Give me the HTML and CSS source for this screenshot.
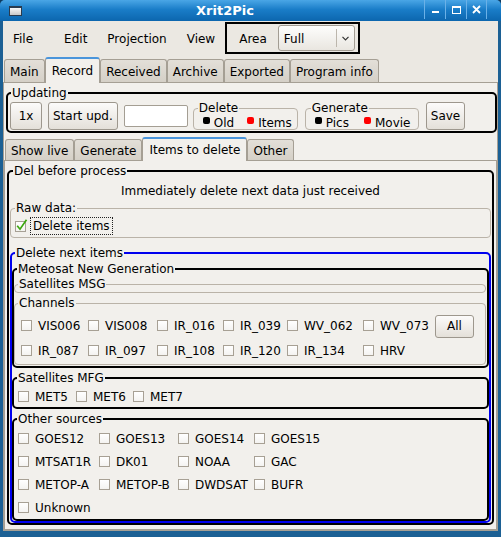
FILE: index.html
```html
<!DOCTYPE html>
<html lang="en">
<head>
<meta charset="utf-8">
<title>Xrit2Pic</title>
<link rel="stylesheet" href="styles.css">
</head>
<body>
<div class="window">
  <div class="titlebar">
    <span class="title-icon"></span>
    <span class="title">Xrit2Pic</span>
    <div class="wm">
      <span class="wm-btn"><svg width="9" height="9" viewBox="0 0 9 9"><rect x="1" y="6" width="7" height="2" fill="#fff"/></svg></span>
      <span class="wm-btn"><svg width="9" height="9" viewBox="0 0 9 9"><rect x="0.5" y="1.5" width="8" height="7" fill="none" stroke="#fff"/><rect x="0" y="1" width="9" height="2" fill="#fff"/></svg></span>
      <span class="wm-btn"><svg width="9" height="9" viewBox="0 0 9 9"><path d="M1 1L8 8M8 1L1 8" stroke="#fff" stroke-width="1.8"/></svg></span>
    </div>
  </div>
  <div class="client">
    <div class="menubar">
      <span class="menu-item menu-file">File</span>
      <span class="menu-item">Edit</span>
      <span class="menu-item">Projection</span>
      <span class="menu-item">View</span>
      <div class="area-box">
        <span class="area-label">Area</span>
        <div class="combo">
          <span class="combo-text">Full</span>
          <span class="combo-sep"></span>
          <span class="combo-arrow"><svg width="7" height="5" viewBox="0 0 7 5"><path d="M0.5 0.8L3.5 3.8L6.5 0.8" fill="none" stroke="#333" stroke-width="1.2"/></svg></span>
        </div>
      </div>
    </div>
    <div class="tabs">
      <span class="tab">Main</span>
      <span class="tab active">Record</span>
      <span class="tab">Received</span>
      <span class="tab">Archive</span>
      <span class="tab">Exported</span>
      <span class="tab">Program info</span>
    </div>
    <div class="page">
      <fieldset class="bframe updating">
        <legend>Updating</legend>
        <div class="upd-row">
          <button class="btn btn-1x">1x</button>
          <button class="btn">Start upd.</button>
          <input class="entry" type="text">
          <fieldset class="gframe opts opts-del">
            <legend>Delete</legend>
            <div class="opt-row">
              <span class="opt"><i class="dot"></i>Old</span>
              <span class="opt"><i class="dot red"></i>Items</span>
            </div>
          </fieldset>
          <fieldset class="gframe opts opts-gen">
            <legend>Generate</legend>
            <div class="opt-row">
              <span class="opt"><i class="dot"></i>Pics</span>
              <span class="opt"><i class="dot red"></i>Movie</span>
            </div>
          </fieldset>
          <button class="btn">Save</button>
        </div>
      </fieldset>

      <div class="subnb">
        <div class="tabs subtabs">
          <span class="tab">Show live</span>
          <span class="tab">Generate</span>
          <span class="tab active">Items to delete</span>
          <span class="tab">Other</span>
        </div>
        <div class="subpage">
          <fieldset class="bframe del">
            <legend>Del before process</legend>
            <div class="intro">Immediately delete next data just received</div>
            <fieldset class="gframe raw">
              <legend>Raw data:</legend>
              <div class="raw-row">
                <span class="box checked"><svg class="check" width="13" height="13" viewBox="0 0 13 13"><path d="M2.2 6.8L5 10.2L11.5 0.8" fill="none" stroke="#3ca80f" stroke-width="1.7"/></svg></span>
                <span class="focus">Delete items</span>
              </div>
            </fieldset>

            <fieldset class="bframe blue">
              <legend>Delete next items</legend>

              <fieldset class="bframe mng">
                <legend>Meteosat New Generation</legend>
                <fieldset class="gframe msg"><legend>Satellites MSG</legend></fieldset>
                <fieldset class="gframe chan">
                  <legend>Channels</legend>
                  <div class="grid channels-grid">
                    <span class="cb"><span class="box"></span>VIS006</span>
                    <span class="cb"><span class="box"></span>VIS008</span>
                    <span class="cb"><span class="box"></span>IR_016</span>
                    <span class="cb"><span class="box"></span>IR_039</span>
                    <span class="cb"><span class="box"></span>WV_062</span>
                    <span class="cb"><span class="box"></span>WV_073</span>
                    <button class="btn btn-all">All</button>
                    <span class="cb"><span class="box"></span>IR_087</span>
                    <span class="cb"><span class="box"></span>IR_097</span>
                    <span class="cb"><span class="box"></span>IR_108</span>
                    <span class="cb"><span class="box"></span>IR_120</span>
                    <span class="cb"><span class="box"></span>IR_134</span>
                    <span class="cb"><span class="box"></span>HRV</span>
                  </div>
                </fieldset>
              </fieldset>

              <fieldset class="bframe mfg">
                <legend>Satellites MFG</legend>
                <div class="grid mfg-grid">
                  <span class="cb"><span class="box"></span>MET5</span>
                  <span class="cb"><span class="box"></span>MET6</span>
                  <span class="cb"><span class="box"></span>MET7</span>
                </div>
              </fieldset>

              <fieldset class="bframe other">
                <legend>Other sources</legend>
                <div class="grid other-grid">
                  <span class="cb"><span class="box"></span>GOES12</span>
                  <span class="cb"><span class="box"></span>GOES13</span>
                  <span class="cb"><span class="box"></span>GOES14</span>
                  <span class="cb"><span class="box"></span>GOES15</span>
                  <span class="cb"><span class="box"></span>MTSAT1R</span>
                  <span class="cb"><span class="box"></span>DK01</span>
                  <span class="cb"><span class="box"></span>NOAA</span>
                  <span class="cb"><span class="box"></span>GAC</span>
                  <span class="cb"><span class="box"></span>METOP-A</span>
                  <span class="cb"><span class="box"></span>METOP-B</span>
                  <span class="cb"><span class="box"></span>DWDSAT</span>
                  <span class="cb"><span class="box"></span>BUFR</span>
                  <span class="cb"><span class="box"></span>Unknown</span>
                </div>
              </fieldset>
            </fieldset>
          </fieldset>
        </div>
      </div>
    </div>
  </div>
</div>
</body>
</html>
```
FILE: styles.css
```css
* { box-sizing: border-box; }
html, body { margin: 0; padding: 0; }
body {
  width: 501px; height: 537px; overflow: hidden;
  background: #0e3a5e;
  font-family: "DejaVu Sans", sans-serif; font-size: 12px; color: #000;
}
.window {
  width: 501px; height: 537px;
  display: flex; flex-direction: column;
  background: #1c6094;
  border-radius: 5px 5px 0 0;
}
.titlebar {
  height: 21px; flex: none;
  display: flex; align-items: center;
  background: linear-gradient(#4aa6e6, #1a7dc8 45%, #0c66ae);
  border-radius: 5px 5px 0 0;
  color: #fff;
}
.title-icon {
  width: 13px; height: 10px; margin-left: 9px;
  border: 1px solid #2a3b4e; border-top-width: 2px;
  background: linear-gradient(#f8f8f8, #c8c8c8);
}
.title {
  flex: 1; text-align: center; padding-left: 4px;
  font-weight: bold; font-size: 13px; line-height: 21px;
}
.wm { display: flex; align-self: flex-start; margin-right: 14px; }
.wm-btn {
  width: 21px; height: 19px;
  border-left: 1px solid #6bb1e7;
  display: flex; align-items: center; justify-content: center;
}
.wm-btn:last-child { border-right: 1px solid #6bb1e7; }
.wm-btn svg { display: block; }

.client {
  flex: 1; min-height: 0;
  display: flex; flex-direction: column;
  margin: 0 3px 6px 3px;
  background: #ebe8e2;
}

/* menu bar */
.menubar {
  height: 34px; flex: none;
  display: flex; align-items: center;
  padding-left: 10px;
}
.menu-item { line-height: 14px; white-space: nowrap; padding-top: 2px; }
.menu-item + .menu-item { margin-left: 20px; }
.menu-file { margin-right: 11px; }
.area-box {
  margin-left: 10px; width: 135px; height: 32px;
  border: 2px solid #000;
  display: flex; align-items: center;
  padding-left: 12px;
}
.area-label { padding-top: 2px; }
.combo {
  margin-left: 11px; width: 77px; height: 26px;
  border: 1px solid #a29c92; border-radius: 3px;
  background: linear-gradient(#fdfdfc, #e9e6e0);
  display: flex; align-items: center;
}
.combo-text { flex: 1; padding-left: 5px; padding-top: 1px; }
.combo-sep { width: 1px; height: 18px; background: #bcb6ac; }
.combo-arrow { width: 17px; display: flex; justify-content: center; }
.combo-arrow svg { display: block; }

/* notebook tabs */
.tabs {
  height: 27px; flex: none;
  display: flex; align-items: flex-end;
  padding-left: 1px;
}
.tab {
  height: 23px; padding: 1px 5px 0;
  border: 1px solid #a59f94; border-bottom: none;
  border-radius: 3px 3px 0 0;
  background: linear-gradient(#e3dfd8, #d5d0c7);
  display: flex; align-items: center;
  white-space: nowrap;
}
.tab.active {
  height: 26px; margin-bottom: -1px; padding: 0 6px;
  background: #f2f0ec;
  border-top: 2px solid #4a95db;
  position: relative; z-index: 1;
}
.page {
  flex: 1; min-height: 0;
  display: flex; flex-direction: column;
  background: #f2f0ec;
  border: 1px solid #a59f94;
  padding-top: 2px;
}

/* frames */
fieldset { margin: 0; padding: 0; min-width: 0; border: 0; }
legend { padding: 0 1px; line-height: 14px; white-space: nowrap; }
.bframe { border: 2px solid #000; border-radius: 5px; }
.gframe { border: 1px solid #bab3a8; border-radius: 4px; }

.updating { margin-left: 2px; }
.updating > legend { line-height: 16px; margin-left: 3px; }
.upd-row {
  display: flex; align-items: center;
  height: 29px; padding-left: 2px; margin-bottom: 1px;
}
.btn {
  font: inherit; color: #000;
  height: 28px; padding: 0 4px;
  border: 1px solid #9d978d; border-radius: 3px;
  background: linear-gradient(#fcfbfa, #e4e0d9);
  margin-right: 6px;
}
.btn-1x { width: 32px; }
.entry {
  width: 64px; height: 22px; margin: 0 5px 0 0; padding: 0;
  border: 1px solid #a49e93; border-radius: 2px;
  background: #fff;
}
.opts { height: 29px; margin-right: 7px; }
.opts > legend { margin-left: 4px; }
.opts-del { width: 105px; }
.opts-gen { width: 114px; }
.opts-gen > legend { margin-left: 5px; }
.opt-row {
  display: flex; height: 14px; line-height: 14px;
  padding-left: 9px; gap: 13px;
}
.opts-gen .opt-row { gap: 15px; }
.opt { display: flex; align-items: center; padding-top: 1px; }
.dot {
  width: 7px; height: 7px; border-radius: 2px;
  margin: 0 4px 5px 0;
  background: #000;
}
.dot.red { background: #f00; }

/* sub notebook */
.subnb {
  flex: 1; min-height: 0;
  display: flex; flex-direction: column;
  margin-top: 4px;
}
.subtabs { height: 23px; }
.subtabs .tab { height: 21px; }
.subtabs .tab.active { height: 24px; }
.subpage {
  flex: 1; min-height: 0;
  background: #f2f0ec;
  border: 1px solid #a59f94;
  padding: 3px 2px 0 2px;
}

.del > legend { margin-left: 4px; }
.intro { text-align: center; line-height: 14px; margin-top: 6px; }
.raw { margin: 3px 1px 0 1px; }
.raw > legend { margin-left: 4px; }
.raw-row {
  display: flex; align-items: center;
  height: 18px; margin: 2px 0 2px 4px;
}
.raw-row .box { margin-right: 4px; }
.focus { border: 1px dotted #222; padding: 1px 2px; line-height: 14px; }

.blue { border-color: #0000ee; margin: 8px 1px 0 1px; }
.blue > legend, .mng > legend, .mfg > legend, .other > legend,
.msg > legend, .chan > legend { margin-left: 3px; }
.mng { margin-top: 2px; padding-bottom: 1px; }
.msg { margin: 1px 1px 0 0; padding-bottom: 1px; }
.chan { margin: 3px 1px 0 0; }
.mfg { margin-top: 3px; }
.other { margin-top: 3px; }

/* checkbox grids */
.grid { display: grid; align-items: center; }
.channels-grid {
  grid-template-columns: 67px 69px 66px 64px 76px 72px auto;
  grid-auto-rows: 24px; row-gap: 1px;
  padding: 4px 0 1px 6px;
}
.mfg-grid {
  grid-template-columns: 58px 57px auto;
  grid-auto-rows: 20px;
  padding: 2px 0 0 4px;
}
.other-grid {
  grid-template-columns: 81px 79px 76px auto;
  grid-auto-rows: 23px;
  padding: 1px 0 0 4px;
}
.cb { display: flex; align-items: center; white-space: nowrap; line-height: 14px; }
.cb .box { margin-top: -1px; }
.box {
  width: 11px; height: 11px; flex: none;
  border: 1px solid #a7a094;
  background: linear-gradient(#ffffff, #f4f3f1);
  margin-right: 6px;
  position: relative;
}
.check { position: absolute; left: -1px; top: -3px; }
.btn-all { width: 39px; height: 23px; margin: 0; padding: 0; }
```
